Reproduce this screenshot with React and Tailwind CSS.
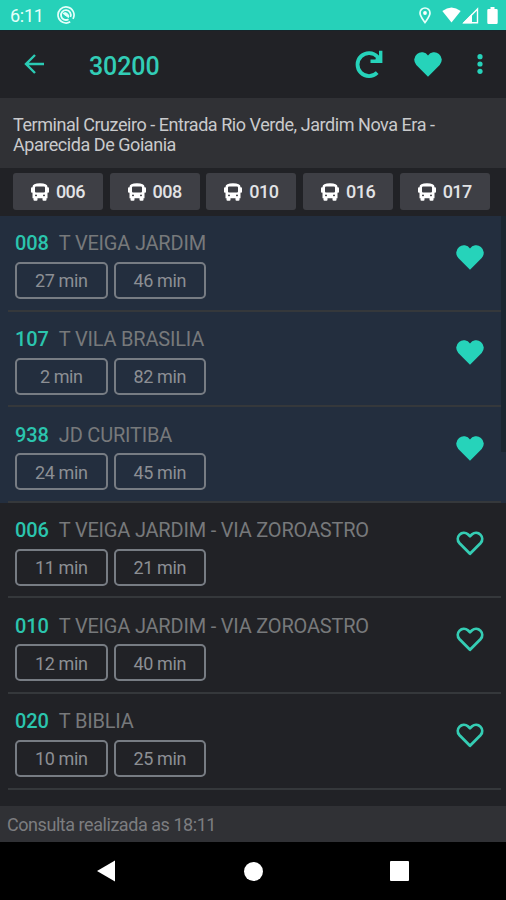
const chips = ["006", "008", "010", "016", "017"];

const lines = [
  { code: "008", name: "T VEIGA JARDIM", times: ["27 min", "46 min"], favorite: true },
  { code: "107", name: "T VILA BRASILIA", times: ["2 min", "82 min"], favorite: true },
  { code: "938", name: "JD CURITIBA", times: ["24 min", "45 min"], favorite: true },
  { code: "006", name: "T VEIGA JARDIM - VIA ZOROASTRO", times: ["11 min", "21 min"], favorite: false },
  { code: "010", name: "T VEIGA JARDIM - VIA ZOROASTRO", times: ["12 min", "40 min"], favorite: false },
  { code: "020", name: "T BIBLIA", times: ["10 min", "25 min"], favorite: false },
];

const Heart = ({ filled }) => (
  <svg width="28" height="25" viewBox="0 0 28 25" className="block shrink-0">
    {filled ? (
      <path
        d="M14 24.7 2.3 12.9A7.5 7.5 0 1 1 14 3.6A7.5 7.5 0 1 1 25.7 12.9Z"
        fill="#26d3ba"
      />
    ) : (
      <path
        d="M14 22.8 3.3 11.9A6.1 6.1 0 0 1 11.9 3.3L14 5.3 16.1 3.3A6.1 6.1 0 0 1 24.7 11.9Z"
        fill="none"
        stroke="#35cdb4"
        strokeWidth="2.8"
        strokeLinejoin="round"
      />
    )}
  </svg>
);

const Bus = () => (
  <svg width="18" height="18" viewBox="0 0 18 18" fill="white">
    <path
      fillRule="evenodd"
      d="M1.500 4Q1.500 0.300 9 0.300T16.500 4V15.200H1.500ZM4 4.500V8.600Q4 9.600 5 9.600H13Q14 9.600 14 8.600V4.500Q14 3.500 13 3.500H5Q4 3.500 4 4.500ZM4 12.500A1 1 0 1 0 6 12.500A1 1 0 1 0 4 12.500ZM12 12.500A1 1 0 1 0 14 12.500A1 1 0 1 0 12 12.500Z"
    />
    <rect x="0" y="4.300" width="2.300" height="5.500" rx="1" />
    <rect x="15.700" y="4.300" width="2.300" height="5.500" rx="1" />
    <rect x="2.500" y="13.500" width="4" height="4.300" rx="1" />
    <rect x="11.500" y="13.500" width="4" height="4.300" rx="1" />
  </svg>
);

const StatusBar = () => (
  <div className="flex h-[30px] items-center bg-[#26d1b9] pl-[10px] pr-[8px] text-white">
    <span className="w-[33px] pt-[1px] text-[18px] leading-[30px] tracking-[-0.3px] text-[#e5fffa]">6:11</span>
    <svg width="18" height="18" viewBox="0 0 18 18" className="ml-[14px]" fill="none" stroke="#e5fffa">
      <path d="M13.200 15.800A8 8 0 1 1 16 12.900" strokeWidth="1.700" />
      <path d="M11.500 13.200A4.900 4.900 0 1 1 13.400 11" strokeWidth="1.800" />
      <path d="M6.500 7Q9.500 5.500 11.500 9V11.500L6.500 8Z" fill="#e5fffa" strokeWidth="1" />
    </svg>
    <svg width="12" height="17" viewBox="0 0 12 17" className="ml-auto mr-[-1px]" fill="none" stroke="#e5fffa">
      <path d="M6 15.500C3.500 12 1 9 1 6A5 5 0 0 1 11 6C11 9 8.500 12 6 15.500Z" strokeWidth="1.700" />
      <circle cx="6" cy="6" r="1.900" fill="white" stroke="none" />
    </svg>
    <svg width="19" height="16" viewBox="0 0 19 16" className="ml-[12px]" fill="white">
      <path d="M0.300 4Q9.500 -3 18.700 4L9.500 15.500Z" />
    </svg>
    <svg width="17" height="17" viewBox="0 0 17 17" className="ml-[1px]">
      <path d="M2 15.700H15.500V2Z" fill="none" stroke="white" strokeWidth="1.400" />
      <path d="M0.500 16.200H10V6.800Z" fill="white" />
    </svg>
    <svg width="11" height="17" viewBox="0 0 11 17" className="ml-[8px]" fill="white">
      <path d="M3.500 0H7.500V2H9.500Q10.700 2 10.700 3.200V15.500Q10.700 17 9.500 17H1.500Q0.300 17 0.300 15.500V3.200Q0.300 2 1.500 2H3.500Z" />
    </svg>
  </div>
);

const Header = () => (
  <div className="flex h-[68px] items-center bg-[#212226] pl-[24px] pr-[23px] shadow-[inset_0_1px_0_#17252a]">
    <svg width="21" height="20" viewBox="0 0 21 20" fill="none" stroke="#2bcbb4" strokeWidth="2.4">
      <path d="M20 10H2M11 1 2 10 11 19" />
    </svg>
    <h1 className="ml-[44px] pt-[5px] text-[25px] font-medium leading-[30px] tracking-[-0.1px] text-[#32cdb6]">
      30200
    </h1>
    <svg width="28" height="28" viewBox="0 0 28 28" className="ml-auto" fill="none" stroke="#26d3ba">
      <path d="M22.200 22.700A11.500 11.500 0 1 1 22.500 6.800L24.500 9" strokeWidth="3.800" />
      <path d="M25.700 0.800V11.300H15.500" strokeWidth="3.400" />
      <path d="M21 7 26 5V12H20Z" fill="#26d3ba" stroke="none" />
    </svg>
    <div className="ml-[31px]">
      <Heart filled />
    </div>
    <svg width="6" height="20" viewBox="0 0 6 20" className="ml-[35px]" fill="#26d3ba">
      <circle cx="3" cy="2.700" r="2.600" />
      <circle cx="3" cy="10" r="2.600" />
      <circle cx="3" cy="17.300" r="2.600" />
    </svg>
  </div>
);

const LineRow = ({ line }) => (
  <div className={line.favorite ? "bg-[#232e3e]" : "bg-[#212226]"}>
    <div className="ml-[8px] mr-[5px] flex h-[95.6px] border-b-2 border-[#35383b] pl-[7px] pr-[17px]">
      <div className="pt-[16.400px]">
        <div className="flex gap-[10px] text-[20px] leading-[22px]">
          <span className="font-medium tracking-[-0.1px] text-[#2bc5ae]">{line.code}</span>
          <span className="whitespace-nowrap tracking-[-0.2px] text-[#77797b]">{line.name}</span>
        </div>
        <div className="mt-[7.600px] flex gap-[6px]">
          {line.times.map((time) => (
            <div
              key={time}
              className="flex h-[37px] w-[92.5px] items-center justify-center rounded-[5px] border-2 border-[#777c83] pt-px text-[18px] tracking-[-0.4px] text-[#8c8f94]"
            >
              {time}
            </div>
          ))}
        </div>
      </div>
      <div className="ml-auto pt-[28.700px]">
        <Heart filled={line.favorite} />
      </div>
    </div>
  </div>
);

const App = () => {
  return (
    <div className="flex h-[900px] w-[506px] flex-col overflow-hidden bg-[#212226] font-[Roboto,sans-serif]">
      <StatusBar />
      <Header />

      {/* STOP ADDRESS */}
      <div className="h-[70px] bg-[#303135] px-[13px] pt-[16.500px] text-[18px] leading-[20px] tracking-[-0.45px] text-[#c9cacc]">
        Terminal Cruzeiro - Entrada Rio Verde, Jardim Nova Era - <br />
        Aparecida De Goiania
      </div>

      {/* LINE FILTERS */}
      <div className="flex h-[48px] gap-[6.700px] pl-[13px] pt-[5px]">
        {chips.map((chip) => (
          <div
            key={chip}
            className="flex h-[37px] w-[90px] items-center justify-center gap-[7px] rounded-[3px] bg-[#3e3f45] text-[18px] font-medium tracking-[-0.5px] text-[#e2e3e5]"
          >
            <Bus />
            {chip}
          </div>
        ))}
      </div>

      {/* ARRIVALS */}
      <div className="relative h-[590px]">
        {lines.map((line) => (
          <LineRow key={line.code} line={line} />
        ))}
        <div className="absolute right-0 top-0 h-[236px] w-[5px] bg-[#1c2630]" />
      </div>

      <div className="h-[36px] bg-[#303135] pl-[7px] text-[18px] leading-[38px] tracking-[-0.45px] text-[#7c7d80]">
        Consulta realizada as 18:11
      </div>

      {/* SYSTEM NAVIGATION */}
      <div className="flex h-[58px] items-center justify-between bg-black pl-[97px] pr-[97px]">
        <svg width="19" height="22" viewBox="0 0 19 22" fill="white">
          <path d="M0 11 18 0.500V21.500Z" />
        </svg>
        <div className="ml-[2px] size-[19px] rounded-full bg-white" />
        <div className="size-[19.500px] rounded-[1px] bg-white" />
      </div>
    </div>
  );
};

export default App;
